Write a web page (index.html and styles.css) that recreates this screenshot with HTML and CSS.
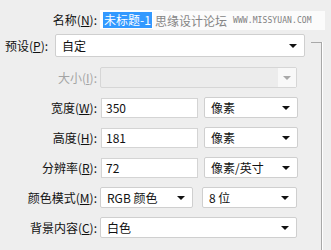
FILE: index.html
```html
<!DOCTYPE html>
<html lang="zh-CN">
<head>
  <meta charset="UTF-8">
  <title>新建</title>
  <link rel="stylesheet" href="styles.css">
</head>
<body>
  <div class="dialog">
    <div class="form">
      <div class="row row-name">
        <label class="label">名称(<u>N</u>):</label>
        <div class="name-field"><span class="sel">未标题-1</span></div>
        <div class="mark">
          <span class="mark-cn">思缘设计论坛</span>
          <span class="mark-en">WWW.MISSYUAN.COM</span>
        </div>
      </div>

      <div class="row row-preset">
        <label class="label-preset">预设(<u>P</u>):</label>
        <div class="select select-preset">自定<i class="arrow"></i></div>
      </div>

      <div class="rows">
        <div class="row">
          <label class="label disabled">大小(<u>I</u>):</label>
          <div class="select select-off"><span class="btn-off"><i class="arrow"></i></span></div>
        </div>
        <div class="row">
          <label class="label">宽度(<u>W</u>):</label>
          <div class="input">350</div>
          <div class="select select-unit">像素<i class="arrow"></i></div>
        </div>
        <div class="row">
          <label class="label">高度(<u>H</u>):</label>
          <div class="input">181</div>
          <div class="select select-unit">像素<i class="arrow"></i></div>
        </div>
        <div class="row">
          <label class="label">分辨率(<u>R</u>):</label>
          <div class="input">72</div>
          <div class="select select-unit">像素/英寸<i class="arrow"></i></div>
        </div>
        <div class="row">
          <label class="label">颜色模式(<u>M</u>):</label>
          <div class="select select-mode">RGB 颜色<i class="arrow"></i></div>
          <div class="select select-bits">8 位<i class="arrow"></i></div>
        </div>
        <div class="row">
          <label class="label">背景内容(<u>C</u>):</label>
          <div class="select select-bg">白色<i class="arrow"></i></div>
        </div>
      </div>
    </div>
    <div class="group"></div>
  </div>
</body>
</html>
```

FILE: styles.css
```css
/* Cuadro de diálogo */
body {
  margin: 0;
  background: #eeeeee;
  font-family: "Noto Sans CJK SC", "Liberation Sans", sans-serif;
  font-size: 12px;
  color: #111;
}
.dialog {
  display: flex;
  height: 250px;
  overflow: hidden;
}
.form {
  width: 311px;
  padding-top: 10px;
}
.group {
  width: 10px;
  margin-top: 42px;
  margin-right: 9px;
  border-top: 1px solid #a8a8a8;
  border-right: 1px solid #a8a8a8;
  box-shadow: 1px 0 0 #fff;
}
.row {
  display: flex;
  align-items: center;
  height: 21px;
  position: relative;
}
u {
  text-decoration: underline;
  text-underline-offset: 1px;
}
.label {
  width: 97px;
  text-align: right;
  padding-right: 3px;
  white-space: nowrap;
  flex: none;
}
.label.disabled {
  color: #a4a4a4;
}
/* Nombre */
.row-name {
  height: 19px;
}
.name-field {
  width: 60px;
  height: 19px;
  background: #fff;
  display: flex;
  align-items: center;
  padding-left: 3px;
}
.sel {
  background: #3399ff;
  color: #fff;
  font-size: 12px;
  line-height: 16px;
  padding: 0 1px;
}
.mark {
  position: absolute;
  left: 153px;
  top: 1px;
  width: 172px;
  height: 19px;
  background: #fbfbfb;
  display: flex;
  align-items: center;
  gap: 6px;
}
.mark-cn {
  color: #858585;
  font-size: 12px;
  padding-left: 2px;
}
.mark-en {
  color: #808080;
  font-family: "DejaVu Sans Mono", monospace;
  font-size: 8px;
  letter-spacing: 0.1px;
}
/* Preajuste */
.row-preset {
  height: 23px;
  margin-top: 5px;
}
.label-preset {
  width: 50px;
  padding-left: 5px;
  white-space: nowrap;
}
/* Listas */
.select {
  position: relative;
  box-sizing: border-box;
  height: 21px;
  background: #fff;
  border: 1px solid #cfcfcf;
  border-radius: 2px;
  padding-left: 6px;
  display: flex;
  align-items: center;
  flex: none;
}
.arrow {
  position: absolute;
  right: 7px;
  top: 50%;
  margin-top: -2px;
  width: 0;
  height: 0;
  border-left: 4px solid transparent;
  border-right: 4px solid transparent;
  border-top: 4px solid #111;
}
.select-preset {
  width: 250px;
  height: 23px;
}
.rows {
  display: flex;
  flex-direction: column;
  gap: 9px;
  margin-top: 10px;
}
.select-off {
  width: 197px;
  background: #ececec;
  border-color: #d6d6d6;
  padding: 0;
  justify-content: flex-end;
}
.btn-off {
  position: relative;
  width: 18px;
  height: 19px;
  background: #f8f8f8;
}
.btn-off .arrow {
  right: 5px;
  border-top-color: #a8a8a8;
}
.input {
  box-sizing: border-box;
  width: 97px;
  height: 20px;
  margin-left: 1px;
  background: #fff;
  border: 1px solid #d4d4d4;
  padding-left: 4px;
  display: flex;
  align-items: center;
}
.select-unit {
  width: 94px;
  margin-left: 6px;
}
.select-mode {
  width: 93px;
}
.select-bits {
  width: 95px;
  margin-left: 9px;
}
.select-bg {
  width: 197px;
}
```
